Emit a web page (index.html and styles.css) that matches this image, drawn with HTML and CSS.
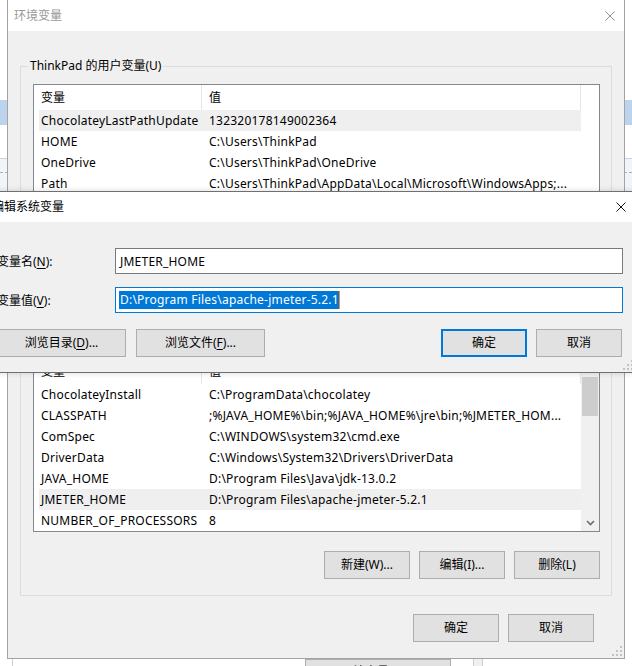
FILE: index.html
```html
<!DOCTYPE html>
<html lang="zh-CN">
<head>
    <meta charset="UTF-8">
    <meta name="viewport" content="width=device-width, initial-scale=1.0">
    <title>环境变量</title>
    <link rel="stylesheet" href="styles.css">
</head>
<body>
    <div class="desk">
        <!-- system properties window behind the dialogs -->
        <div class="sysprops">
            <div class="sp-band"></div>
            <div class="sp-panel"><div class="sp-dash"></div></div>
            <div class="sp-foot">
                <span class="sp-line"></span>
                <button class="sp-btn">环境变量(N)...</button>
                <span class="sp-scroll"></span>
            </div>
        </div>

        <!-- 环境变量 -->
        <div class="dlg env">
            <div class="titlebar">
                <span class="title">环境变量</span>
                <svg class="close" width="10" height="10" viewBox="0 0 10 10"><path d="M0.5 0.5L9.5 9.5M9.5 0.5L0.5 9.5" stroke="#8f8f8f" stroke-width="1"/></svg>
            </div>
            <div class="env-body">
                <div class="group">
                    <span class="group-label">ThinkPad 的用户变量(U)</span>
                    <div class="lv">
                        <div class="lv-main">
                            <div class="lv-head">
                                <span class="hc c1">变量</span>
                                <span class="hc c2">值</span>
                                <span class="hc fill"></span>
                            </div>
                            <div class="lv-row sel"><span class="c1">ChocolateyLastPathUpdate</span><span class="c2">132320178149002364</span></div>
                            <div class="lv-row"><span class="c1">HOME</span><span class="c2">C:\Users\ThinkPad</span></div>
                            <div class="lv-row"><span class="c1">OneDrive</span><span class="c2">C:\Users\ThinkPad\OneDrive</span></div>
                            <div class="lv-row"><span class="c1">Path</span><span class="c2">C:\Users\ThinkPad\AppData\Local\Microsoft\WindowsApps;...</span></div>
                            <div class="lv-row"><span class="c1">TEMP</span><span class="c2">C:\Users\ThinkPad\AppData\Local\Temp</span></div>
                            <div class="lv-row"><span class="c1">TMP</span><span class="c2">C:\Users\ThinkPad\AppData\Local\Temp</span></div>
                        </div>
                    </div>
                    <div class="btn-row">
                        <button class="btn">新建(N)...</button>
                        <button class="btn">编辑(E)...</button>
                        <button class="btn">删除(D)</button>
                    </div>
                </div>

                <div class="group sys">
                    <span class="group-label">系统变量(S)</span>
                    <div class="lv">
                        <div class="lv-main">
                            <div class="lv-head">
                                <span class="hc c1">变量</span>
                                <span class="hc c2">值</span>
                            </div>
                            <div class="lv-row"><span class="c1">ChocolateyInstall</span><span class="c2">C:\ProgramData\chocolatey</span></div>
                            <div class="lv-row"><span class="c1">CLASSPATH</span><span class="c2">;%JAVA_HOME%\bin;%JAVA_HOME%\jre\bin;%JMETER_HOM...</span></div>
                            <div class="lv-row"><span class="c1">ComSpec</span><span class="c2">C:\WINDOWS\system32\cmd.exe</span></div>
                            <div class="lv-row"><span class="c1">DriverData</span><span class="c2">C:\Windows\System32\Drivers\DriverData</span></div>
                            <div class="lv-row"><span class="c1">JAVA_HOME</span><span class="c2">D:\Program Files\Java\jdk-13.0.2</span></div>
                            <div class="lv-row sel"><span class="c1">JMETER_HOME</span><span class="c2">D:\Program Files\apache-jmeter-5.2.1</span></div>
                            <div class="lv-row"><span class="c1">NUMBER_OF_PROCESSORS</span><span class="c2">8</span></div>
                        </div>
                        <div class="vscroll">
                            <span class="thumb"></span>
                            <span class="arrow-dn">
                                <svg width="9" height="6" viewBox="0 0 9 6"><path d="M1 1L4.5 4.5L8 1" fill="none" stroke="#6d6d6d" stroke-width="1.6"/></svg>
                            </span>
                        </div>
                    </div>
                    <div class="btn-row">
                        <button class="btn">新建(W)...</button>
                        <button class="btn">编辑(I)...</button>
                        <button class="btn">删除(L)</button>
                    </div>
                </div>

                <div class="btn-row foot">
                    <button class="btn">确定</button>
                    <button class="btn">取消</button>
                </div>
            </div>
            <svg class="grip" width="10" height="10" viewBox="0 0 10 10"><path d="M8 0h2v2h-2zM4 4h2v2h-2zM8 4h2v2h-2zM0 8h2v2h-2zM4 8h2v2h-2zM8 8h2v2h-2z" fill="#c2c2c2"/></svg>
        </div>

        <!-- 编辑系统变量 -->
        <div class="dlg edit">
            <div class="titlebar">
                <span class="title">编辑系统变量</span>
                <svg class="close" width="10" height="10" viewBox="0 0 10 10"><path d="M0.5 0.5L9.5 9.5M9.5 0.5L0.5 9.5" stroke="#111" stroke-width="1"/></svg>
            </div>
            <div class="edit-body">
                <div class="field">
                    <span class="field-label">变量名(<u>N</u>):</span>
                    <div class="input">JMETER_HOME</div>
                </div>
                <div class="field">
                    <span class="field-label">变量值(<u>V</u>):</span>
                    <div class="input focus"><span class="selection">D:\Program Files\apache-jmeter-5.2.1</span><span class="caret"></span></div>
                </div>
                <div class="edit-btns">
                    <button class="btn wide">浏览目录(<u>D</u>)...</button>
                    <button class="btn wide">浏览文件(<u>F</u>)...</button>
                    <button class="btn ok">确定</button>
                    <button class="btn">取消</button>
                </div>
            </div>
            <svg class="grip" width="10" height="10" viewBox="0 0 10 10"><path d="M8 0h2v2h-2zM4 4h2v2h-2zM8 4h2v2h-2zM0 8h2v2h-2zM4 8h2v2h-2zM8 8h2v2h-2z" fill="#c2c2c2"/></svg>
        </div>
    </div>
</body>
</html>
```

FILE: styles.css
```css
* {
    box-sizing: border-box;
}
html, body {
    margin: 0;
}
body {
    width: 632px;
    height: 666px;
    overflow: hidden;
    background: #fff;
    color: #000;
    font-family: "Noto Sans", "Noto Sans CJK SC", sans-serif;
    font-size: 12px;
}
button {
    font-family: inherit;
    font-size: 12px;
    color: #000;
}
.desk {
    position: relative;
    width: 632px;
    height: 666px;
    overflow: hidden;
}

/* window behind */
.sysprops {
    height: 100%;
    display: flex;
    flex-direction: column;
}
.sp-band {
    margin-top: 100px;
    height: 25px;
    background: #bcd3ee;
}
.sp-panel {
    margin-top: 33px;
    height: 90px;
    background: #f1f5fa;
    border-top: 1px solid #c9d3df;
}
.sp-dash {
    margin-top: 13px;
    border-top: 1px dashed #a9b4c1;
}
.sp-foot {
    margin-top: auto;
    height: 7px;
    display: flex;
    align-items: flex-start;
}
.sp-line {
    margin-left: 12px;
    width: 1px;
    height: 7px;
    background: #cfcfcf;
}
.sp-btn {
    margin-left: 292px;
    width: 146px;
    height: 23px;
    padding: 0;
    background: #e1e1e1;
    border: 1px solid #adadad;
    line-height: 23px;
}
.sp-scroll {
    margin-left: 22px;
    width: 10px;
    height: 7px;
    background: #f0f0f0;
    border-left: 1px solid #cfcfcf;
    border-right: 1px solid #cfcfcf;
}

/* dialogs */
.dlg {
    position: absolute;
    display: flex;
    flex-direction: column;
    background: #f0f0f0;
}
.titlebar {
    display: flex;
    align-items: center;
    background: #fff;
    padding-left: 6px;
}
.title {
    line-height: 16px;
}
.close {
    margin-left: auto;
    margin-right: 9px;
}
.grip {
    position: absolute;
    right: 2px;
    bottom: 2px;
}
.btn {
    width: 86px;
    height: 28px;
    padding: 0;
    background: #e1e1e1;
    border: 1px solid #adadad;
    line-height: 26px;
    white-space: nowrap;
}
.btn u {
    text-decoration-thickness: 1px;
    text-underline-offset: 2px;
}

/* 环境变量 */
.env {
    left: 7px;
    top: -1px;
    width: 618px;
    height: 660px;
    border: 1px solid #a3a3a3;
}
.env .titlebar {
    height: 31px;
    flex: none;
}
.env .title {
    color: #999;
}
.env-body {
    flex: 1;
    padding: 35px 12px 0 12px;
}
.group {
    position: relative;
    border: 1px solid #dcdcdc;
    padding: 17px 11px 16px 12px;
}
.group.sys {
    margin-top: 18px;
}
.group-label {
    position: absolute;
    top: -9px;
    left: 7px;
    padding: 0 2px;
    background: #f0f0f0;
    line-height: 16px;
}
.lv {
    height: 174px;
    display: flex;
    background: #fff;
    border: 1px solid #828790;
}
.lv-main {
    flex: 1;
    min-width: 0;
}
.lv-head {
    height: 25px;
    display: flex;
}
.hc {
    padding-left: 7px;
    line-height: 25px;
    border-right: 1px solid #e5e5e5;
}
.hc.c1 {
    width: 168px;
}
.hc.c2 {
    width: 379px;
}
.hc.fill {
    flex: 1;
    border-right: none;
}
.lv-row {
    margin-left: 5px;
    width: 542px;
    height: 21px;
    display: flex;
    align-items: center;
    white-space: nowrap;
    letter-spacing: 0.22px;
}
.lv-row.sel {
    background: #efefef;
}
.lv-row .c1 {
    width: 163px;
    padding-left: 2px;
    overflow: hidden;
}
.lv-row .c2 {
    flex: 1;
    padding-left: 7px;
    overflow: hidden;
}
.vscroll {
    width: 18px;
    display: flex;
    flex-direction: column;
    background: #f0f0f0;
}
.thumb {
    margin: 18px 1px 0 1px;
    height: 39px;
    background: #cdcdcd;
}
.arrow-dn {
    margin-top: auto;
    height: 17px;
    display: flex;
    align-items: center;
    justify-content: center;
}
.btn-row {
    margin-top: 19px;
    display: flex;
    justify-content: flex-end;
    gap: 9px;
}
.btn-row.foot {
    margin-top: 18px;
    padding-right: 18px;
}

/* 编辑系统变量 */
.edit {
    left: -15px;
    top: 191px;
    width: 651px;
    height: 182px;
    border: 1px solid #6f6f6f;
    box-shadow: 0 0 6px rgba(0, 0, 0, 0.15);
}
.edit .titlebar {
    height: 30px;
    flex: none;
}
.edit-body {
    padding: 26px 12px 15px 11px;
}
.field {
    display: flex;
    align-items: center;
    height: 26px;
}
.field + .field {
    margin-top: 13px;
}
.field-label {
    width: 118px;
    white-space: nowrap;
}
.field-label u {
    text-decoration-thickness: 1px;
    text-underline-offset: 2px;
}
.input {
    width: 508px;
    height: 26px;
    display: flex;
    align-items: center;
    padding-left: 4px;
    background: #fff;
    border: 1px solid #7a7a7a;
    white-space: nowrap;
    letter-spacing: 0.22px;
}
.input.focus {
    padding-left: 3px;
    border-color: #0078d7;
}
.selection {
    padding-left: 1px;
    background: #0078d7;
    color: #fff;
    line-height: 18px;
}
.caret {
    width: 1px;
    height: 18px;
    background: #ff8728;
}
.edit-btns {
    margin-top: 16px;
    display: flex;
}
.btn.wide {
    width: 129px;
}
.btn.wide + .btn.wide {
    margin-left: 10px;
}
.btn.ok {
    margin-left: auto;
    border: 2px solid #0078d7;
    line-height: 24px;
}
.btn.ok + .btn {
    margin-left: 9px;
    margin-right: 1px;
}
```
